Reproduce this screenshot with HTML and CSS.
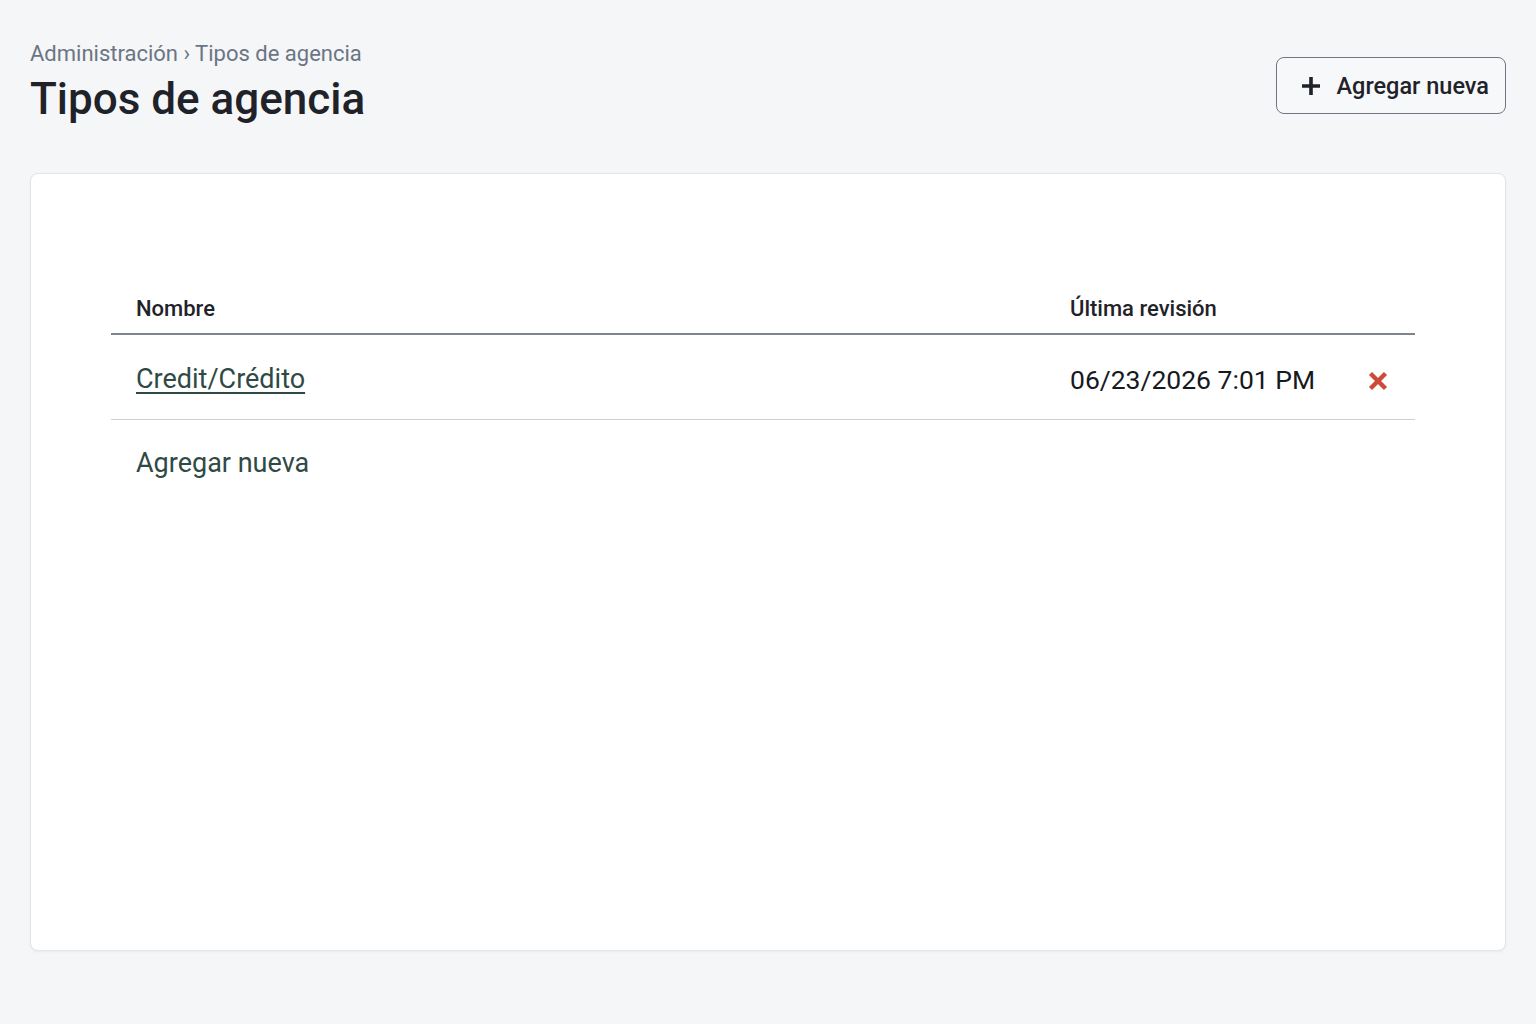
FILE: index.html
```html
<!DOCTYPE html>
<html lang="es">
<head>
    <meta charset="UTF-8">
    <meta name="viewport" content="width=device-width, initial-scale=1.0">
    <title>Tipos de agencia</title>
    <link rel="stylesheet" href="styles.css">
</head>
<body>
    <div class="page-header">
        <div>
            <div class="breadcrumb">Administración › Tipos de agencia</div>
            <h1>Tipos de agencia</h1>
        </div>
        <a href="#" class="add-btn">
            <svg width="20" height="20" viewBox="0 0 20 20"><path d="M10 1v18M1 10h18" stroke="#1f2329" stroke-width="3.6" stroke-linecap="butt"/></svg>
            Agregar nueva
        </a>
    </div>

    <div class="card">
        <table class="list-table">
            <thead>
                <tr>
                    <th class="col-name">Nombre</th>
                    <th class="col-date">Última revisión</th>
                    <th class="col-action"></th>
                </tr>
            </thead>
            <tbody>
                <tr>
                    <td><a href="#" class="item-link">Credit/Crédito</a></td>
                    <td class="date">06/23/2026 7:01 PM</td>
                    <td class="action">
                        <svg width="22" height="22" viewBox="0 0 22 22"><path d="M3.5 3.5l15 15M18.5 3.5l-15 15" stroke="#cc4a36" stroke-width="4.4" stroke-linecap="butt"/></svg>
                    </td>
                </tr>
            </tbody>
        </table>
        <a href="#" class="add-link">Agregar nueva</a>
    </div>
</body>
</html>
```

FILE: styles.css
```css
body {
    font-family: Roboto, "Liberation Sans", sans-serif;
    margin: 0;
    padding: 41px 30px 72px 30px;
    background-color: #f5f6f8;
    color: #1f2329;
}
.page-header {
    display: flex;
    justify-content: space-between;
    align-items: flex-start;
    margin-bottom: 48px;
}
.breadcrumb {
    font-size: 22px;
    color: #6b7583;
    line-height: 26px;
}
h1 {
    margin: 6px 0 0 0;
    font-size: 44px;
    font-weight: 500;
    line-height: 52px;
    color: #1f2329;
}
.add-btn {
    display: flex;
    align-items: center;
    gap: 16px;
    margin-top: 16px;
    height: 55px;
    padding: 0 16px 0 24px;
    border: 1.5px solid #6f7681;
    border-radius: 8px;
    background: #f7f8fa;
    color: #1f2329;
    text-decoration: none;
    font-size: 23.5px;
    font-weight: 500;
}
.card {
    background: white;
    border: 1px solid #e1e4e9;
    border-radius: 8px;
    box-shadow: 0 1px 3px rgba(0,0,0,0.05);
    height: 664px;
    padding: 112px 90px 0 80px;
}
.list-table {
    width: 100%;
    border-collapse: collapse;
    table-layout: fixed;
}
.list-table th,
.list-table td {
    box-sizing: border-box;
}
.list-table th {
    text-align: left;
    font-size: 22px;
    font-weight: 500;
    color: #1f2329;
    padding: 10px 25px 12px 25px;
    border-bottom: 2px solid #7d8591;
}
.col-name {
    width: 934px;
}
.col-action {
    width: 74px;
}
.list-table td {
    padding: 28px 25px 24px 25px;
    font-size: 27px;
    white-space: nowrap;
    border-bottom: 1px solid #c9d0da;
}
.item-link {
    color: #2f4a45;
    text-decoration: underline;
    text-underline-offset: 4px;
    text-decoration-thickness: 1.5px;
}
.list-table td.date {
    color: #16191d;
    font-size: 26.5px;
}
.list-table td.action {
    padding-left: 0;
    padding-right: 0;
    text-align: center;
}
.action svg {
    vertical-align: middle;
}
.add-link {
    display: block;
    margin: 27px 0 0 25px;
    font-size: 27px;
    color: #2f4a45;
    text-decoration: none;
}
```
